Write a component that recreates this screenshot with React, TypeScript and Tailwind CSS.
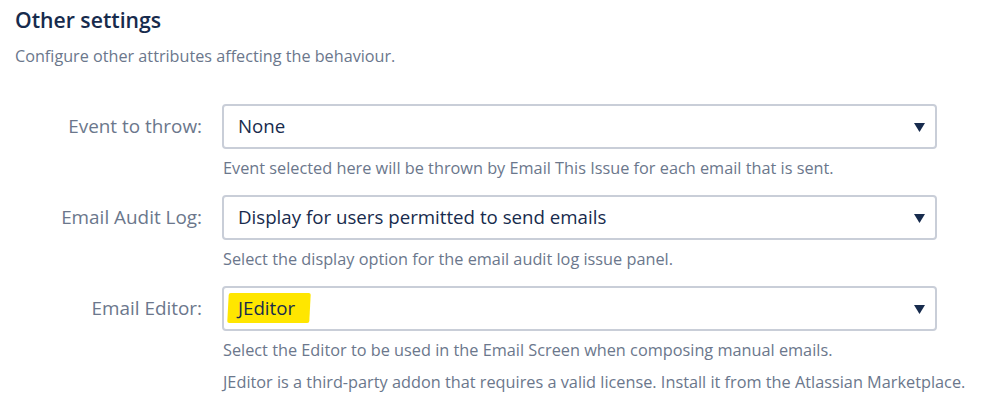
import React from "react";

const font = { fontFamily: '"Open Sans", "Noto Sans", Arial, sans-serif' };

function Arrow() {
  return (
    <svg width="11" height="10" viewBox="0 0 11 10" className="shrink-0">
      <polygon points="0,1 11,1 5.5,10" fill="#172b4d" />
    </svg>
  );
}

function Row({
  label,
  value,
  help,
}: {
  label: string;
  value: React.ReactNode;
  help: string[];
}) {
  return (
    <div className="flex">
      <div className="w-[207px] shrink-0 pr-[20px] pt-[8px] text-right text-[18.9px] text-[#6b778c]">
        {label}
      </div>
      <div className="flex w-[715px] flex-col">
        <div className="flex h-[45px] items-center justify-between rounded-[4px] border-2 border-[#c9ced8] bg-white pl-[14px] pr-[10px] text-[18.7px] text-[#172b4d]">
          <span>{value}</span>
          <Arrow />
        </div>
        <div className="mt-[9px] flex flex-col gap-[12px] whitespace-nowrap pl-[1px] text-[16.3px] leading-[20px] text-[#6b778c]">
          {help.map((h) => (
            <div key={h}>{h}</div>
          ))}
        </div>
      </div>
    </div>
  );
}

export default function App() {
  return (
    <div className="h-[412px] w-[999px] overflow-hidden bg-white pl-[15px] pt-[6px]" style={font}>
      <h2 className="text-[21.2px] font-semibold leading-[28px] text-[#172b4d]">Other settings</h2>
      <p className="mt-[11px] text-[16.2px] leading-[22px] text-[#6b778c]">
        Configure other attributes affecting the behaviour.
      </p>
      <div className="mt-[37px] flex flex-col gap-[17px]">
        <Row
          label="Event to throw:"
          value="None"
          help={["Event selected here will be thrown by Email This Issue for each email that is sent."]}
        />
        <Row
          label="Email Audit Log:"
          value="Display for users permitted to send emails"
          help={["Select the display option for the email audit log issue panel."]}
        />
        <Row
          label="Email Editor:"
          value={
            <span className="-ml-[10px] inline-block -skew-x-3 rounded-[2px] bg-[#ffe600] pl-[10px] pr-[15px] py-[1px]">
              <span className="inline-block skew-x-3">JEditor</span>
            </span>
          }
          help={[
            "Select the Editor to be used in the Email Screen when composing manual emails.",
            "JEditor is a third-party addon that requires a valid license. Install it from the Atlassian Marketplace.",
          ]}
        />
      </div>
    </div>
  );
}
